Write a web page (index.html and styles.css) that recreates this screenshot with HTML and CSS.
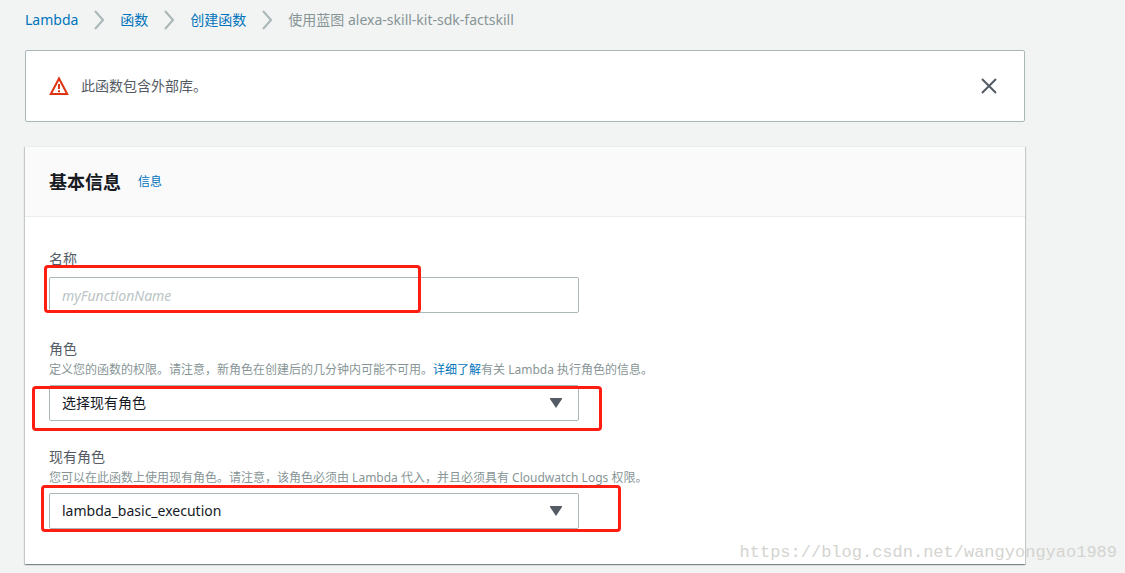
FILE: index.html
```html
<!DOCTYPE html>
<html lang="zh-CN">
<head>
  <meta charset="UTF-8" />
  <meta name="viewport" content="width=device-width, initial-scale=1.0" />
  <title>Lambda - 创建函数</title>
  <link rel="stylesheet" href="styles.css">
</head>
<body>
  <main>
    <nav class="breadcrumb">
      <a href="#">Lambda</a>
      <svg width="10" height="20" viewBox="0 0 10 20"><path d="M1 1l8 9-8 9" /></svg>
      <a href="#">函数</a>
      <svg width="10" height="20" viewBox="0 0 10 20"><path d="M1 1l8 9-8 9" /></svg>
      <a href="#">创建函数</a>
      <svg width="10" height="20" viewBox="0 0 10 20"><path d="M1 1l8 9-8 9" /></svg>
      <span>使用蓝图 alexa-skill-kit-sdk-factskill</span>
    </nav>

    <div class="alert">
      <svg class="alert-icon" width="20" height="20" viewBox="0 0 20 20">
        <path d="M10 2.500L1.800 18h16.400z" />
        <path d="M10 8v5M10 14.300v2" />
      </svg>
      <p>此函数包含外部库。</p>
      <button type="button" class="close" aria-label="关闭">
        <svg width="16" height="16" viewBox="0 0 16 16"><path d="M1 1l14 14M15 1L1 15" /></svg>
      </button>
    </div>

    <section class="panel">
      <header class="panel-header">
        <h2>基本信息</h2>
        <a href="#">信息</a>
      </header>
      <form class="panel-body">
        <div class="field">
          <label for="name">名称</label>
          <div class="control">
            <input type="text" id="name" placeholder="myFunctionName" />
            <span class="mark mark-name"></span>
          </div>
        </div>

        <div class="field">
          <label for="role">角色</label>
          <p class="hint">定义您的函数的权限。请注意，新角色在创建后的几分钟内可能不可用。<a href="#">详细了解</a>有关 Lambda 执行角色的信息。</p>
          <div class="control">
            <select id="role">
              <option>选择现有角色</option>
            </select>
            <svg class="arrow" width="12" height="10" viewBox="0 0 12 10"><path d="M0 0h12v1L6 10 0 1z" /></svg>
            <span class="mark mark-role"></span>
          </div>
        </div>

        <div class="field">
          <label for="existing">现有角色</label>
          <p class="hint">您可以在此函数上使用现有角色。请注意，该角色必须由 Lambda 代入，并且必须具有 Cloudwatch Logs 权限。</p>
          <div class="control">
            <select id="existing">
              <option>lambda_basic_execution</option>
            </select>
            <svg class="arrow" width="12" height="10" viewBox="0 0 12 10"><path d="M0 0h12v1L6 10 0 1z" /></svg>
            <span class="mark mark-existing"></span>
          </div>
        </div>
      </form>
    </section>
  </main>
  <div class="watermark">https://blog.csdn.net/wangyongyao1989</div>
</body>
</html>
```

FILE: styles.css
```css
* {
  box-sizing: border-box;
}
body {
  font-family: "Noto Sans", "Noto Sans CJK SC", sans-serif;
  font-size: 14px;
  line-height: 20px;
  margin: 0;
  color: #16191f;
  background: #f2f3f3;
}
main {
  padding: 10px 100px 8px 25px;
}
h2, p {
  margin: 0;
}
a {
  color: #0073bb;
  text-decoration: none;
}
.breadcrumb {
  display: flex;
  align-items: center;
  gap: 16px;
  height: 20px;
  margin-bottom: 20px;
  color: #879596;
}
.breadcrumb svg {
  fill: none;
  stroke: #aab7b8;
  stroke-width: 2;
}
.alert {
  display: flex;
  align-items: center;
  gap: 12px;
  height: 72px;
  padding: 0 23px;
  margin-bottom: 24px;
  color: #545b64;
  background: #fff;
  border: 1px solid #aab7b8;
  border-radius: 2px;
}
.alert-icon {
  fill: none;
  stroke: #df3312;
  stroke-width: 2;
}
.close {
  display: flex;
  margin-left: auto;
  padding: 4px;
  background: none;
  border: 0;
}
.close svg {
  fill: none;
  stroke: #545b64;
  stroke-width: 2;
}
.panel {
  background: #fff;
  border-top: 1px solid #eaeded;
  box-shadow: 0 1px 1px 0 rgba(0, 28, 36, 0.3), 1px 1px 1px 0 rgba(0, 28, 36, 0.15), -1px 1px 1px 0 rgba(0, 28, 36, 0.15);
}
.panel-header {
  display: flex;
  align-items: center;
  gap: 17px;
  height: 70px;
  padding: 0 24px;
  background: #fafafa;
  border-bottom: 1px solid #eaeded;
}
.panel-header h2 {
  font-size: 18px;
  line-height: 24px;
}
.panel-header a {
  font-size: 12px;
}
.panel-body {
  padding: 32px 24px 35px;
}
.field {
  margin-bottom: 26px;
}
.field:last-child {
  margin-bottom: 0;
}
.field label {
  display: block;
  color: #545b64;
}
.hint {
  margin-top: 1px;
  font-size: 12px;
  color: #879596;
}
.control {
  position: relative;
  max-width: 530px;
  margin-top: 8px;
}
.hint + .control {
  margin-top: 5px;
}
.control input, .control select {
  display: block;
  width: 100%;
  height: 36px;
  padding: 0 12px;
  font: inherit;
  color: #16191f;
  background: #fff;
  border: 1px solid #aab7b8;
  border-radius: 2px;
  appearance: none;
}
.control input::placeholder {
  color: #bcc4c5;
  font-style: italic;
}
.arrow {
  position: absolute;
  top: 13px;
  right: 17px;
  fill: #545b64;
  pointer-events: none;
}

/* red highlight boxes */
.mark {
  position: absolute;
  border: 3px solid #ff1d12;
  border-radius: 4px;
  pointer-events: none;
}
.mark-name {
  top: -12px;
  left: -5px;
  width: 377px;
  height: 48px;
}
.mark-role {
  top: 1px;
  left: -17px;
  width: 570px;
  height: 45px;
}
.mark-existing {
  top: -8px;
  left: -8px;
  width: 580px;
  height: 47px;
}
.watermark {
  position: absolute;
  right: 8px;
  top: 543px;
  font-family: "Liberation Mono", monospace;
  font-size: 17px;
  color: #d4d4d0;
}
```
